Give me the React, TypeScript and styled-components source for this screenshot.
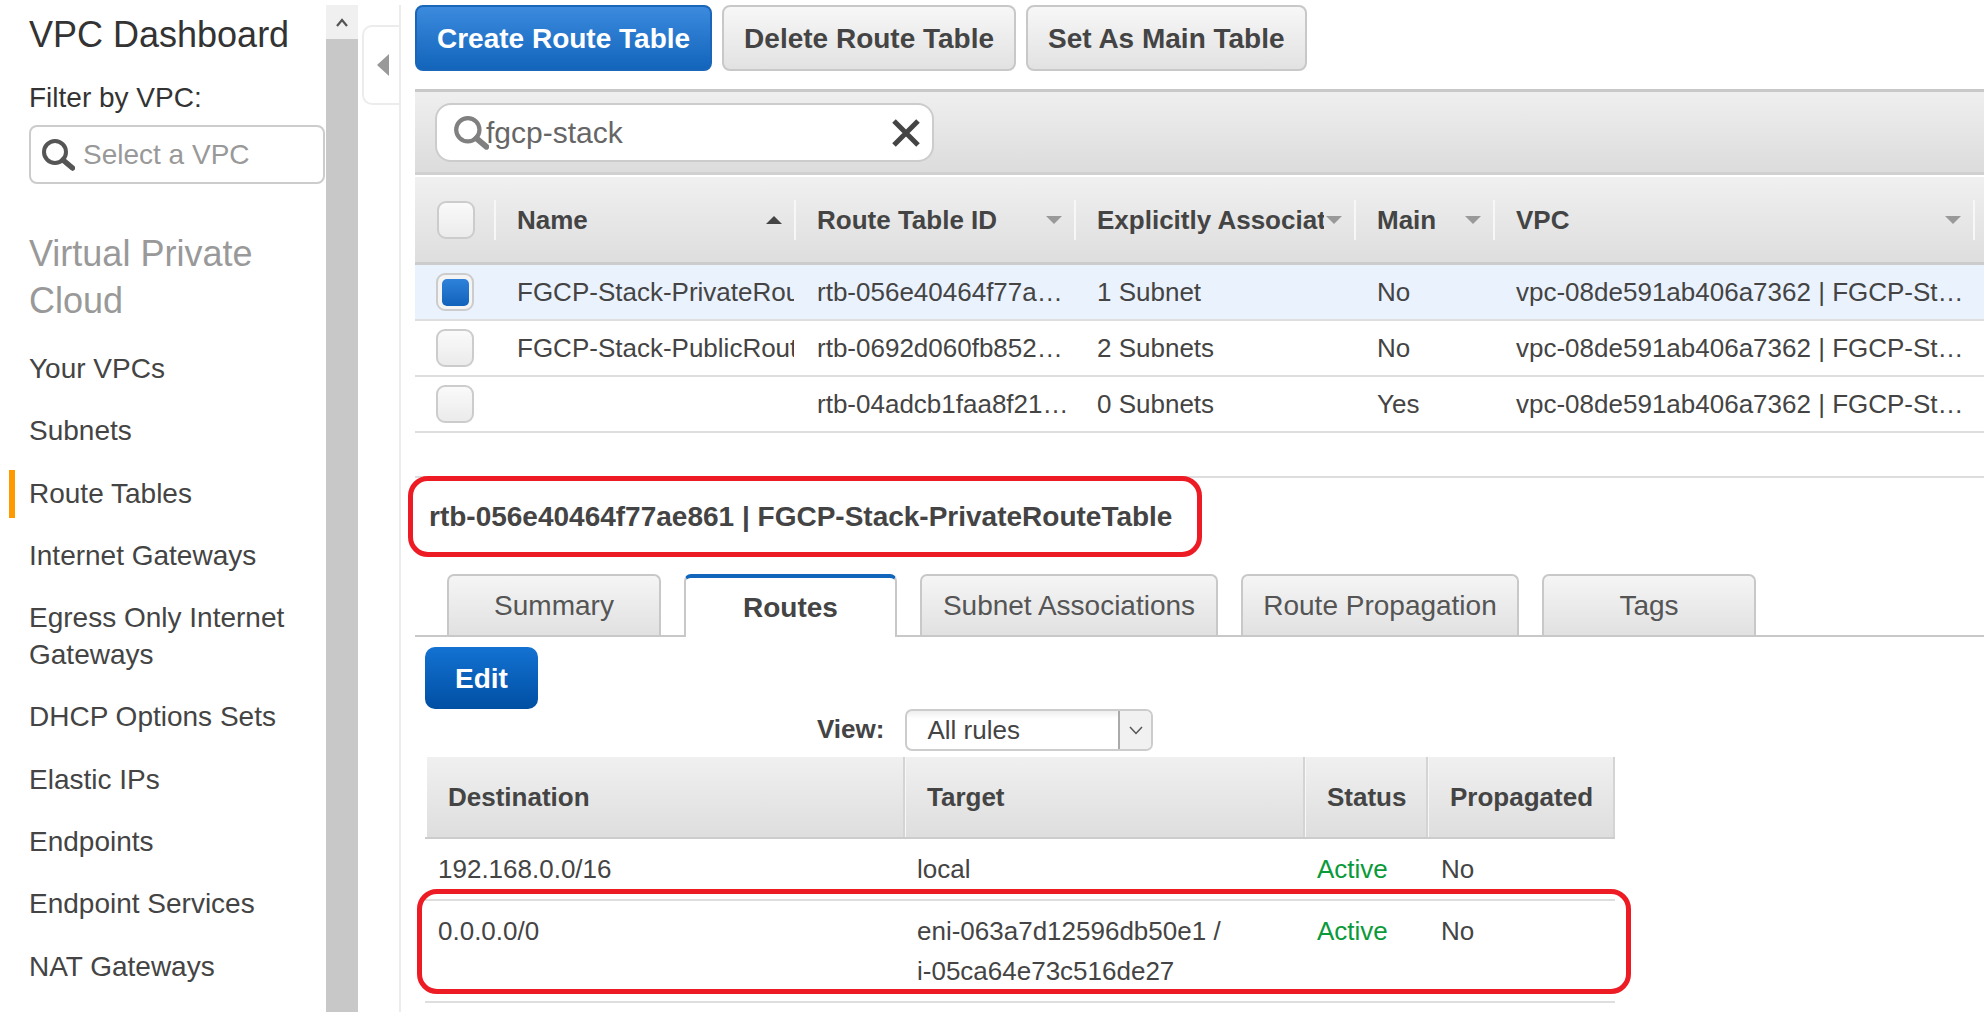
import React from "react";
import styled, { createGlobalStyle } from "styled-components";

const Global = createGlobalStyle`
  html, body { margin: 0; padding: 0; background: #fff; }
  body { font-family: "Liberation Sans", Arial, sans-serif; color: #444; overflow: hidden; }
  * { box-sizing: border-box; }
`;

const Page = styled.div`
  display: flex;
  height: 1012px;
  padding-top: 5px;
  overflow: hidden;
`;

const Sidebar = styled.aside`
  width: 326px;
  flex: none;
  padding-left: 29px;
`;
const SideTitle = styled.h1`
  margin: 10px 0 0;
  font-size: 36px;
  line-height: 40px;
  font-weight: 400;
  color: #333;
`;
const FilterLabel = styled.div`
  margin-top: 23.5px;
  font-size: 28px;
  line-height: 37px;
  color: #333;
`;
const VpcInput = styled.div`
  margin-top: 9.5px;
  width: 296px;
  height: 59px;
  border: 2px solid #ccc;
  border-radius: 8px;
  display: flex;
  align-items: center;
  padding-left: 10px;
  gap: 8px;
  font-size: 28px;
  color: #999;
`;
const SectionTitle = styled.h2`
  margin: 46px 0 26px;
  font-size: 36px;
  line-height: 47px;
  font-weight: 400;
  color: #999;
  width: 290px;
`;
const Nav = styled.nav`
  display: flex;
  flex-direction: column;
  gap: 25.3px;
`;
const NavItem = styled.div<{ $active?: boolean }>`
  position: relative;
  font-size: 28px;
  line-height: 37px;
  color: #444;
  width: 280px;
  &::before {
    content: "";
    display: ${(p) => (p.$active ? "block" : "none")};
    position: absolute;
    left: -20px;
    top: -4.5px;
    bottom: -6.5px;
    width: 6px;
    background: #f90;
  }
`;

const Scrollbar = styled.div`
  width: 32px;
  flex: none;
  background: #c8c8c8;
  display: flex;
  flex-direction: column;
`;
const ScrollUp = styled.div`
  height: 34px;
  background: #f0f0f0;
  display: flex;
  align-items: center;
  justify-content: center;
`;

const Gutter = styled.div`
  width: 43px;
  flex: none;
  padding: 20px 0 0 4px;
  border-right: 2px solid #ececec;
`;
const CollapseHandle = styled.div`
  width: 37px;
  height: 80px;
  border: 2px solid #ececec;
  border-right: none;
  border-radius: 10px 0 0 10px;
  display: flex;
  align-items: center;
  padding-left: 13px;
  &::before {
    content: "";
    border-style: solid;
    border-width: 11px 12px 11px 0;
    border-color: transparent #999 transparent transparent;
  }
`;

const Main = styled.main`
  position: relative;
  flex: 1;
  min-width: 0;
  margin-left: 14px;
`;
const ButtonRow = styled.div`
  display: flex;
  gap: 10px;
  height: 66px;
  margin-bottom: 18px;
`;
const Button = styled.div<{ $primary?: boolean }>`
  height: 66px;
  padding: 1px 20px 0;
  display: flex;
  align-items: center;
  border-radius: 8px;
  font-size: 28px;
  font-weight: 700;
  border: 2px solid ${(p) => (p.$primary ? "#1a66b8" : "#c8c8c8")};
  color: ${(p) => (p.$primary ? "#fff" : "#444")};
  background: ${(p) =>
    p.$primary
      ? "linear-gradient(#3b8ade, #1265bb)"
      : "linear-gradient(#f7f7f7, #e2e2e2)"};
`;
const FilterBand = styled.div`
  height: 86px;
  border-top: 3px solid #c8c8c8;
  border-bottom: 3px solid #d0d0d0;
  background: linear-gradient(#efefef, #dcdcdc);
  padding: 11px 0 0 20px;
`;
const SearchBox = styled.div`
  width: 499px;
  height: 59px;
  background: #fff;
  border: 2px solid #ccc;
  border-radius: 16px;
  display: flex;
  align-items: center;
  padding: 0 11px 0 16px;
  font-size: 30px;
  color: #666;
`;
const SearchText = styled.span`
  flex: 1;
  margin-left: -3px;
`;

const GRID = "79px 300px 280px 280px 139px 480px 1fr";
const HeadRow = styled.div`
  margin-top: 2px;
  height: 88px;
  display: grid;
  grid-template-columns: ${GRID};
  align-items: center;
  background: linear-gradient(#f0f0f0, #dedede);
  border-bottom: 3px solid #ccc;
`;
const HeadCheck = styled.div`
  padding-left: 22px;
`;
const HeadCell = styled.div`
  height: 40px;
  position: relative;
  display: flex;
  align-items: center;
  padding: 1px 0 0 21px;
  border-left: 2px solid #f7f7f7;
  font-size: 26px;
  font-weight: 700;
  color: #444;
`;
const HeadLabel = styled.span`
  flex: 1;
  min-width: 0;
  margin-right: 30px;
  overflow: hidden;
  white-space: nowrap;
`;
const SortArrow = styled.span<{ $up?: boolean }>`
  position: absolute;
  right: 12px;
  top: 16px;
  width: 0;
  height: 0;
  border-left: 8px solid transparent;
  border-right: 8px solid transparent;
  ${(p) =>
    p.$up
      ? "border-bottom: 8px solid #444; border-top: none;"
      : "border-top: 8px solid #999; border-bottom: none;"}
`;
const Row = styled.div<{ $selected?: boolean }>`
  height: 56px;
  display: grid;
  grid-template-columns: ${GRID};
  align-items: center;
  border-bottom: 2px solid #dedede;
  background: ${(p) => (p.$selected ? "#eaf2fd" : "#fff")};
  font-size: 26px;
  color: #444;
`;
const CheckCell = styled.div`
  padding-left: 21px;
`;
const CheckBox = styled.div<{ $checked?: boolean }>`
  width: 38px;
  height: 38px;
  border: 2px solid #ccc;
  border-radius: 9px;
  background: ${(p) =>
    p.$checked ? "#f4f4f4" : "linear-gradient(#fafafa, #ebebeb)"};
  padding: 3.5px;
  &::before {
    content: "";
    display: ${(p) => (p.$checked ? "block" : "none")};
    height: 100%;
    border-radius: 5px;
    background: linear-gradient(#2f82da, #1062ba);
  }
`;
const Cell = styled.div`
  padding-left: 23px;
  overflow: hidden;
  white-space: nowrap;
`;

const Detail = styled.section`
  margin-top: 43px;
  border-top: 2px solid #ddd;
`;
const DetailTitle = styled.div`
  height: 96px;
  padding: 19px 0 0 14px;
  font-size: 28px;
  line-height: 40px;
  font-weight: 700;
  color: #444;
`;
const TabBar = styled.div`
  display: flex;
  gap: 23px;
  height: 63px;
  padding-left: 32px;
  border-bottom: 2px solid #c8c8c8;
`;
const Tab = styled.div<{ $active?: boolean; $w: number }>`
  width: ${(p) => p.$w}px;
  height: ${(p) => (p.$active ? 63 : 61)}px;
  display: flex;
  align-items: center;
  justify-content: center;
  font-size: 28px;
  border: 2px solid #c8c8c8;
  border-bottom: none;
  border-radius: 7px 7px 0 0;
  ${(p) =>
    p.$active
      ? "background:#fff;border-top:4px solid #1166bb;font-weight:700;color:#444;"
      : "background:linear-gradient(#f5f5f5,#e1e1e1);color:#555;"}
`;
const EditButton = styled.div`
  margin: 10px 0 0 10px;
  width: 113px;
  height: 62px;
  padding-top: 1px;
  border-radius: 10px;
  display: flex;
  align-items: center;
  justify-content: center;
  color: #fff;
  font-size: 28px;
  font-weight: 700;
  background: linear-gradient(#1372d2, #004fa3);
`;
const ViewRow = styled.div`
  display: flex;
  align-items: center;
  height: 42px;
  padding-left: 402px;
  gap: 21px;
  font-size: 26px;
`;
const ViewLabel = styled.span`
  font-weight: 700;
  color: #444;
  margin-top: -2px;
`;
const SelectBox = styled.div`
  width: 248px;
  height: 42px;
  border: 2px solid #ccc;
  border-radius: 7px;
  display: flex;
  align-items: center;
  padding-left: 20px;
  background: linear-gradient(#eee, #fff 20%);
  color: #444;
`;
const SelectLabel = styled.span`
  flex: 1;
`;
const SelectArrow = styled.span`
  width: 33px;
  height: 38px;
  border-left: 2px solid #aaa;
  background: #f1f1f1;
  display: flex;
  align-items: center;
  justify-content: center;
  border-radius: 0 5px 5px 0;
`;
const ROUTES_GRID = "480px 400px 123px 187px";
const RoutesTable = styled.div`
  margin: 6px 0 0 10px;
  width: 1190px;
`;
const RoutesHead = styled.div`
  height: 82px;
  display: grid;
  grid-template-columns: ${ROUTES_GRID};
  border-bottom: 2px solid #ccc;
  font-size: 26px;
  font-weight: 700;
`;
const RoutesHeadCell = styled.div<{ $first?: boolean }>`
  display: flex;
  align-items: center;
  padding-left: 21px;
  margin-left: ${(p) => (p.$first ? 2 : 0)}px;
  background: linear-gradient(#f0f0f0, #dedede);
  border-right: 2px solid #d4d4d4;
  border-left: ${(p) => (p.$first ? "none" : "1px solid #f7f7f7")};
  color: #444;
`;
const RouteRow = styled.div`
  display: grid;
  grid-template-columns: ${ROUTES_GRID};
  padding: 10px 0;
  border-bottom: 2px solid #dedede;
  font-size: 26px;
  line-height: 40px;
  color: #444;
`;
const RouteCell = styled.div<{ $ok?: boolean }>`
  padding-left: 12px;
  color: ${(p) => (p.$ok ? "#0a9a3a" : "#444")};
  &:first-child,
  &:last-child {
    padding-left: 13px;
  }
`;
const Highlight = styled.div<{ $x: number; $y: number; $w: number; $h: number }>`
  position: absolute;
  left: ${(p) => p.$x}px;
  top: ${(p) => p.$y}px;
  width: ${(p) => p.$w}px;
  height: ${(p) => p.$h}px;
  border: 5px solid #ed1c24;
  border-radius: 20px;
  pointer-events: none;
`;

const SearchIcon = ({ color, size }: { color: string; size: number }) => (
  <svg width={size} height={size} viewBox="0 0 34 34" style={{ flex: "none" }}>
    <circle cx="14" cy="14" r="11" fill="none" stroke={color} strokeWidth="4" />
    <path d="M22 22l9.5 8" stroke={color} strokeWidth="5.5" strokeLinecap="round" />
  </svg>
);

const rows = [
  { name: "FGCP-Stack-PrivateRouteTable", id: "rtb-056e40464f77a…", sub: "1 Subnet", main: "No", sel: true },
  { name: "FGCP-Stack-PublicRouteTable", id: "rtb-0692d060fb852…", sub: "2 Subnets", main: "No" },
  { name: "", id: "rtb-04adcb1faa8f21…", sub: "0 Subnets", main: "Yes" },
];
const nav = [
  "Your VPCs",
  "Subnets",
  "Route Tables",
  "Internet Gateways",
  "Egress Only Internet Gateways",
  "DHCP Options Sets",
  "Elastic IPs",
  "Endpoints",
  "Endpoint Services",
  "NAT Gateways",
];
const tabs: [string, number][] = [
  ["Summary", 214],
  ["Routes", 213],
  ["Subnet Associations", 298],
  ["Route Propagation", 278],
  ["Tags", 214],
];
const heads = ["Route Table ID", "Explicitly Associated With", "Main", "VPC"];

export default function App() {
  return (
    <Page>
      <Global />
      <Sidebar>
        <SideTitle>VPC Dashboard</SideTitle>
        <FilterLabel>Filter by VPC:</FilterLabel>
        <VpcInput>
          <SearchIcon color="#555" size={34} />
          Select a VPC
        </VpcInput>
        <SectionTitle>Virtual Private Cloud</SectionTitle>
        <Nav>
          {nav.map((n) => (
            <NavItem key={n} $active={n === "Route Tables"}>
              {n}
            </NavItem>
          ))}
        </Nav>
      </Sidebar>
      <Scrollbar>
        <ScrollUp>
          <svg width="12" height="9" viewBox="0 0 12 9">
            <path d="M1 8l5-6 5 6" fill="none" stroke="#555" strokeWidth="2.2" />
          </svg>
        </ScrollUp>
      </Scrollbar>
      <Gutter>
        <CollapseHandle />
      </Gutter>
      <Main>
        <ButtonRow>
          <Button $primary>Create Route Table</Button>
          <Button>Delete Route Table</Button>
          <Button>Set As Main Table</Button>
        </ButtonRow>
        <FilterBand>
          <SearchBox>
            <SearchIcon color="#808080" size={36} />
            <SearchText>fgcp-stack</SearchText>
            <svg width="30" height="30" viewBox="0 0 30 30">
              <path d="M3 3l24 24M27 3L3 27" stroke="#444" strokeWidth="5" />
            </svg>
          </SearchBox>
        </FilterBand>
        <HeadRow>
          <HeadCheck>
            <CheckBox />
          </HeadCheck>
          <HeadCell>
            <HeadLabel>Name</HeadLabel>
            <SortArrow $up />
          </HeadCell>
          {heads.map((h) => (
            <HeadCell key={h}>
              <HeadLabel>{h}</HeadLabel>
              <SortArrow />
            </HeadCell>
          ))}
          <HeadCell />
        </HeadRow>
        {rows.map((r) => (
          <Row key={r.id} $selected={r.sel}>
            <CheckCell>
              <CheckBox $checked={r.sel} />
            </CheckCell>
            <Cell>{r.name}</Cell>
            <Cell>{r.id}</Cell>
            <Cell>{r.sub}</Cell>
            <Cell>{r.main}</Cell>
            <Cell>vpc-08de591ab406a7362 | FGCP-St…</Cell>
          </Row>
        ))}
        <Detail>
          <DetailTitle>rtb-056e40464f77ae861 | FGCP-Stack-PrivateRouteTable</DetailTitle>
          <TabBar>
            {tabs.map(([t, w]) => (
              <Tab key={t} $w={w} $active={t === "Routes"}>
                {t}
              </Tab>
            ))}
          </TabBar>
          <EditButton>Edit</EditButton>
          <ViewRow>
            <ViewLabel>View:</ViewLabel>
            <SelectBox>
              <SelectLabel>All rules</SelectLabel>
              <SelectArrow>
                <svg width="14" height="9" viewBox="0 0 14 9">
                  <path d="M1 1l6 6.5L13 1" fill="none" stroke="#555" strokeWidth="1.5" />
                </svg>
              </SelectArrow>
            </SelectBox>
          </ViewRow>
          <RoutesTable>
            <RoutesHead>
              <RoutesHeadCell $first>Destination</RoutesHeadCell>
              <RoutesHeadCell>Target</RoutesHeadCell>
              <RoutesHeadCell>Status</RoutesHeadCell>
              <RoutesHeadCell>Propagated</RoutesHeadCell>
            </RoutesHead>
            <RouteRow>
              <RouteCell>192.168.0.0/16</RouteCell>
              <RouteCell>local</RouteCell>
              <RouteCell $ok>Active</RouteCell>
              <RouteCell>No</RouteCell>
            </RouteRow>
            <RouteRow>
              <RouteCell>0.0.0.0/0</RouteCell>
              <RouteCell>
                eni-063a7d12596db50e1 /
                <br />
                i-05ca64e73c516de27
              </RouteCell>
              <RouteCell $ok>Active</RouteCell>
              <RouteCell>No</RouteCell>
            </RouteRow>
          </RoutesTable>
        </Detail>
        <Highlight $x={-7} $y={471} $w={794} $h={81} />
        <Highlight $x={2} $y={884} $w={1214} $h={105} />
      </Main>
    </Page>
  );
}
